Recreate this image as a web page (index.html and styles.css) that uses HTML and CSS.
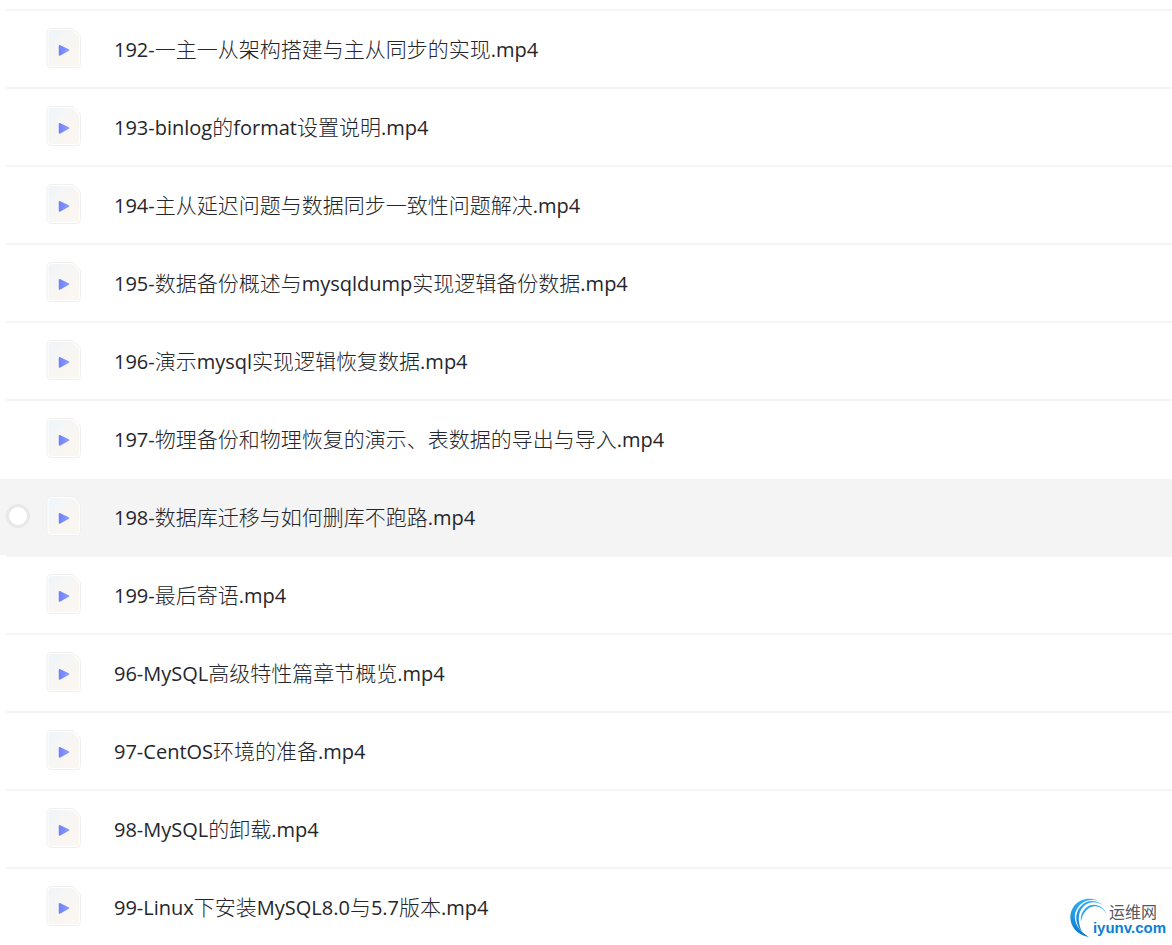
FILE: index.html
```html
<!DOCTYPE html>
<html lang="zh-CN">
<head>
  <meta charset="UTF-8">
  <meta name="viewport" content="width=device-width, initial-scale=1">
  <title>MySQL</title>
  <link rel="stylesheet" href="styles.css">
</head>
<body>
  <!-- shared file icon -->
  <svg class="sprite" width="0" height="0" aria-hidden="true">
    <defs>
      <linearGradient id="paper" x1="0" y1="0" x2="1" y2="1">
        <stop offset="0" stop-color="#eef5fb"></stop>
        <stop offset="0.5" stop-color="#f8f6f3"></stop>
        <stop offset="1" stop-color="#fcf6f0"></stop>
      </linearGradient>
      <linearGradient id="play" x1="0" y1="0" x2="1" y2="0">
        <stop offset="0" stop-color="#6f83fb"></stop>
        <stop offset="1" stop-color="#8c9cff"></stop>
      </linearGradient>
    </defs>
    <symbol id="icon-video" viewBox="0 0 36 40">
      <path d="M5 .5H25.5Q27 .5 28 1.5L33.500 7Q34.500 8 34.500 9.500V35.500Q34.500 39.500 30.500 39.500H5Q1 39.500 1 35.500V4.500Q1 .5 5 .5Z" fill="#fff" stroke="#f0efed" stroke-width="1"></path>
      <path d="M5.500 2H25Q26.200 2 27 2.800L32.200 8Q33 8.800 33 10V35Q33 38 30 38H5.500Q2.500 38 2.500 35V5Q2.500 2 5.500 2Z" fill="url(#paper)"></path>
      <path d="M13.500 17.700L22.500 22L13.500 27Z" fill="url(#play)" stroke="url(#play)" stroke-width="1.500" stroke-linejoin="round"></path>
    </symbol>
  </svg>

  <ul class="file-list">
    <li class="file-item">
      <div class="file-row">
        <input class="file-check" type="checkbox" aria-labelledby="file-192">
        <svg class="file-icon" aria-hidden="true"><use href="#icon-video"></use></svg>
        <a class="file-name" id="file-192" href="#"><span class="latin">192-</span>一主一从架构搭建与主从同步的实现<span class="latin">.mp4</span></a>
      </div>
    </li>
    <li class="file-item">
      <div class="file-row">
        <input class="file-check" type="checkbox" aria-labelledby="file-193">
        <svg class="file-icon" aria-hidden="true"><use href="#icon-video"></use></svg>
        <a class="file-name" id="file-193" href="#"><span class="latin">193-binlog</span>的<span class="latin">format</span>设置说明<span class="latin">.mp4</span></a>
      </div>
    </li>
    <li class="file-item">
      <div class="file-row">
        <input class="file-check" type="checkbox" aria-labelledby="file-194">
        <svg class="file-icon" aria-hidden="true"><use href="#icon-video"></use></svg>
        <a class="file-name" id="file-194" href="#"><span class="latin">194-</span>主从延迟问题与数据同步一致性问题解决<span class="latin">.mp4</span></a>
      </div>
    </li>
    <li class="file-item">
      <div class="file-row">
        <input class="file-check" type="checkbox" aria-labelledby="file-195">
        <svg class="file-icon" aria-hidden="true"><use href="#icon-video"></use></svg>
        <a class="file-name" id="file-195" href="#"><span class="latin">195-</span>数据备份概述与<span class="latin">mysqldump</span>实现逻辑备份数据<span class="latin">.mp4</span></a>
      </div>
    </li>
    <li class="file-item">
      <div class="file-row">
        <input class="file-check" type="checkbox" aria-labelledby="file-196">
        <svg class="file-icon" aria-hidden="true"><use href="#icon-video"></use></svg>
        <a class="file-name" id="file-196" href="#"><span class="latin">196-</span>演示<span class="latin">mysql</span>实现逻辑恢复数据<span class="latin">.mp4</span></a>
      </div>
    </li>
    <li class="file-item before-active">
      <div class="file-row">
        <input class="file-check" type="checkbox" aria-labelledby="file-197">
        <svg class="file-icon" aria-hidden="true"><use href="#icon-video"></use></svg>
        <a class="file-name" id="file-197" href="#"><span class="latin">197-</span>物理备份和物理恢复的演示、表数据的导出与导入<span class="latin">.mp4</span></a>
      </div>
    </li>
    <li class="file-item active">
      <div class="file-row">
        <input class="file-check" type="checkbox" aria-labelledby="file-198">
        <svg class="file-icon" aria-hidden="true"><use href="#icon-video"></use></svg>
        <a class="file-name" id="file-198" href="#"><span class="latin">198-</span>数据库迁移与如何删库不跑路<span class="latin">.mp4</span></a>
      </div>
    </li>
    <li class="file-item">
      <div class="file-row">
        <input class="file-check" type="checkbox" aria-labelledby="file-199">
        <svg class="file-icon" aria-hidden="true"><use href="#icon-video"></use></svg>
        <a class="file-name" id="file-199" href="#"><span class="latin">199-</span>最后寄语<span class="latin">.mp4</span></a>
      </div>
    </li>
    <li class="file-item">
      <div class="file-row">
        <input class="file-check" type="checkbox" aria-labelledby="file-96">
        <svg class="file-icon" aria-hidden="true"><use href="#icon-video"></use></svg>
        <a class="file-name" id="file-96" href="#"><span class="latin">96-MySQL</span>高级特性篇章节概览<span class="latin">.mp4</span></a>
      </div>
    </li>
    <li class="file-item">
      <div class="file-row">
        <input class="file-check" type="checkbox" aria-labelledby="file-97">
        <svg class="file-icon" aria-hidden="true"><use href="#icon-video"></use></svg>
        <a class="file-name" id="file-97" href="#"><span class="latin">97-CentOS</span>环境的准备<span class="latin">.mp4</span></a>
      </div>
    </li>
    <li class="file-item">
      <div class="file-row">
        <input class="file-check" type="checkbox" aria-labelledby="file-98">
        <svg class="file-icon" aria-hidden="true"><use href="#icon-video"></use></svg>
        <a class="file-name" id="file-98" href="#"><span class="latin">98-MySQL</span>的卸载<span class="latin">.mp4</span></a>
      </div>
    </li>
    <li class="file-item">
      <div class="file-row">
        <input class="file-check" type="checkbox" aria-labelledby="file-99">
        <svg class="file-icon" aria-hidden="true"><use href="#icon-video"></use></svg>
        <a class="file-name" id="file-99" href="#"><span class="latin">99-Linux</span>下安装<span class="latin">MySQL8.0</span>与<span class="latin">5.7</span>版本<span class="latin">.mp4</span></a>
      </div>
    </li>
  </ul>

  <div class="watermark">
    <svg class="watermark-logo" width="38" height="40" viewBox="0 0 38 40" aria-hidden="true">
      <defs>
        <linearGradient id="swirl" x1="0" y1="0" x2="0" y2="1">
          <stop offset="0" stop-color="#35aef2"></stop>
          <stop offset="1" stop-color="#0878cc"></stop>
        </linearGradient>
      </defs>
      <path d="M31 4C23-1 11-1 4 8C-4 19 1 36 19 39C8 33 1 21 7 11C12 2 22 0 31 4Z" fill="url(#swirl)"></path>
      <path d="M34 8C27 2 17 1 11 8C4 15 5 26 12 34C8 25 7 16 13 9C19 3 27 3 34 8Z" fill="url(#swirl)"></path>
      <path d="M37 17C34 8 24 4 17 9C12 13 10 18 11 24C12 17 15 13 19 10C26 6 33 9 37 17Z" fill="#2ba3ea"></path>
    </svg>
    <div class="watermark-text">
      <span class="watermark-name">运维网</span>
      <span class="watermark-site">iyunv.com</span>
    </div>
  </div>
</body>
</html>
```

FILE: styles.css
```css
:root {
  --text: #25262b;
  --line: #f4f4f5;
  --hover: #f4f4f4;
  --check-border: #e8e8e8;
}

* {
  margin: 0;
  padding: 0;
  box-sizing: border-box;
}

body {
  position: relative;
  font-family: "Noto Sans CJK SC", sans-serif;
  font-size: 21px;
  color: var(--text);
  background-color: #fff;
}

.sprite {
  position: absolute;
}

.file-list {
  list-style: none;
  padding-top: 9px;
}

/* Separators start a little to the right of the row */
.file-list::before,
.file-item::after {
  content: "";
  display: block;
  height: 2px;
  margin-left: 6px;
  background-color: var(--line);
}

.file-item.before-active::after {
  background-color: transparent;
}

.file-item:last-child::after {
  display: none;
}

.file-row {
  display: flex;
  align-items: center;
  height: 76px;
  padding: 0 6px 2px;
}

.file-item.active .file-row,
.file-row:hover {
  background-color: var(--hover);
}

.file-check {
  appearance: none;
  flex: none;
  width: 24px;
  height: 24px;
  border: 3px solid var(--check-border);
  border-radius: 50%;
  background-color: #fff;
  opacity: 0;
  cursor: pointer;
}

.file-item.active .file-check,
.file-row:hover .file-check,
.file-check:focus-visible {
  opacity: 1;
}

.file-check:checked {
  background-color: #6f83fb;
}

.file-icon {
  flex: none;
  width: 36px;
  height: 40px;
  margin-left: 16px;
}

.file-name {
  margin-left: 32px;
  padding-top: 2px;
  font-weight: 300;
  line-height: 28px;
  color: inherit;
  text-decoration: none;
  white-space: nowrap;
}

.latin {
  font-family: "Open Sans", "Noto Sans", sans-serif;
  font-size: 20px;
  font-weight: 400;
}

.watermark {
  position: absolute;
  right: 6px;
  bottom: 7px;
  display: flex;
}

.watermark-logo {
  margin-right: -15px;
}

.watermark-text {
  display: flex;
  flex-direction: column;
  align-items: flex-end;
  padding-top: 5px;
}

.watermark-name {
  margin-right: 9px;
  font-size: 16px;
  line-height: 16px;
  color: #55585e;
}

.watermark-site {
  font-family: "Liberation Sans", Arial, sans-serif;
  font-size: 15px;
  font-weight: bold;
  line-height: 18px;
  color: #0c80d4;
}
```
